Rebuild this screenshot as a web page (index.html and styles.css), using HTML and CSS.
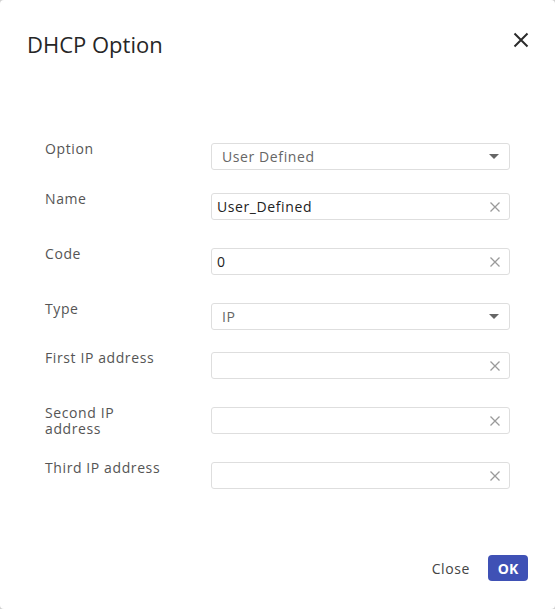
FILE: index.html
```html
<!DOCTYPE html>
<html>
<head>
<meta charset="utf-8">
<link rel="stylesheet" href="styles.css">
</head>
<body>
<div class="dialog">
  <div class="header">
    <h1 class="title">DHCP Option</h1>
    <button class="close-x" aria-label="Close">
      <svg width="16" height="16" viewBox="0 0 16 16"><path d="M1.5 1.5L14.5 14.5M14.5 1.5L1.5 14.5" stroke="#2b2b2b" stroke-width="2" fill="none"/></svg>
    </button>
  </div>
  <div class="form">
    <div class="row gap-50">
      <div class="label">Option</div>
      <div class="field select"><span class="value muted">User Defined</span><span class="caret"></span></div>
    </div>
    <div class="row gap-55">
      <div class="label">Name</div>
      <div class="field input"><span class="value">User_Defined</span><span class="clear"><svg width="10" height="10" viewBox="0 0 10 10"><path d="M0.5 0.5L9.5 9.5M9.5 0.5L0.5 9.5" stroke="#9a9a9a" stroke-width="1.3" fill="none"/></svg></span></div>
    </div>
    <div class="row gap-55">
      <div class="label">Code</div>
      <div class="field input"><span class="value">0</span><span class="clear"><svg width="10" height="10" viewBox="0 0 10 10"><path d="M0.5 0.5L9.5 9.5M9.5 0.5L0.5 9.5" stroke="#9a9a9a" stroke-width="1.3" fill="none"/></svg></span></div>
    </div>
    <div class="row gap-49">
      <div class="label">Type</div>
      <div class="field select"><span class="value muted">IP</span><span class="caret"></span></div>
    </div>
    <div class="row gap-55">
      <div class="label">First IP address</div>
      <div class="field input"><span class="value"></span><span class="clear"><svg width="10" height="10" viewBox="0 0 10 10"><path d="M0.5 0.5L9.5 9.5M9.5 0.5L0.5 9.5" stroke="#9a9a9a" stroke-width="1.3" fill="none"/></svg></span></div>
    </div>
    <div class="row gap-55">
      <div class="label">Second IP<br>address</div>
      <div class="field input"><span class="value"></span><span class="clear"><svg width="10" height="10" viewBox="0 0 10 10"><path d="M0.5 0.5L9.5 9.5M9.5 0.5L0.5 9.5" stroke="#9a9a9a" stroke-width="1.3" fill="none"/></svg></span></div>
    </div>
    <div class="row">
      <div class="label">Third IP address</div>
      <div class="field input"><span class="value"></span><span class="clear"><svg width="10" height="10" viewBox="0 0 10 10"><path d="M0.5 0.5L9.5 9.5M9.5 0.5L0.5 9.5" stroke="#9a9a9a" stroke-width="1.3" fill="none"/></svg></span></div>
    </div>
  </div>
  <div class="footer">
    <button class="btn-text">Close</button>
    <button class="btn-primary">OK</button>
  </div>
</div>
</body>
</html>
```

FILE: styles.css
```css
html, body {
  margin: 0;
  padding: 0;
  background: #d0d0d0;
}
body {
  font-family: "Open Sans", "Liberation Sans", sans-serif;
  color: #333;
}
.dialog {
  width: 555px;
  height: 609px;
  box-sizing: border-box;
  background: #fff;
  border-radius: 4px;
  display: flex;
  flex-direction: column;
}
.header {
  display: flex;
  justify-content: space-between;
  align-items: flex-start;
  padding: 29px 26px 0 27px;
}
.title {
  margin: 0;
  font-size: 22px;
  font-weight: 400;
  line-height: 30px;
  color: #262626;
}
.close-x {
  border: 0;
  background: none;
  padding: 0;
  margin-top: 3px;
  width: 16px;
  height: 16px;
  display: flex;
  cursor: pointer;
}
.form {
  padding: 84px 45px 0 45px;
  display: flex;
  flex-direction: column;
}
.row {
  display: flex;
  align-items: flex-start;
  height: 27px;
}
.gap-50 { margin-bottom: 23px; }
.gap-49 { margin-bottom: 22px; }
.gap-55 { margin-bottom: 28px; }
.label {
  width: 166px;
  flex: none;
  font-size: 14px;
  letter-spacing: 0.6px;
  line-height: 16px;
  margin-top: -2px;
  color: #555;
}
.field {
  width: 299px;
  height: 27px;
  box-sizing: border-box;
  border: 1px solid #dedede;
  border-radius: 3px;
  display: flex;
  align-items: center;
  justify-content: space-between;
  font-size: 14px;
  letter-spacing: 0.6px;
}
.select {
  padding: 0 9px 0 10px;
}
.input {
  padding: 0 9px 0 5px;
}
.value {
  color: #222;
}
.value.muted {
  color: #666;
}
.caret {
  width: 0;
  height: 0;
  border-left: 5px solid transparent;
  border-right: 5px solid transparent;
  border-top: 5px solid #666;
  margin-right: 1px;
}
.clear {
  display: flex;
  width: 10px;
  height: 10px;
}
.footer {
  margin-top: auto;
  display: flex;
  justify-content: flex-end;
  align-items: center;
  gap: 18px;
  padding: 0 27px 28px 0;
}
.btn-text {
  border: 0;
  background: none;
  font-family: inherit;
  font-size: 14px;
  letter-spacing: 0.6px;
  color: #444;
  padding: 0;
}
.btn-primary {
  border: 0;
  background: #3f51b5;
  color: #fff;
  font-family: inherit;
  font-weight: 700;
  font-size: 14px;
  width: 40px;
  height: 26px;
  border-radius: 4px;
  padding: 0;
}
```
